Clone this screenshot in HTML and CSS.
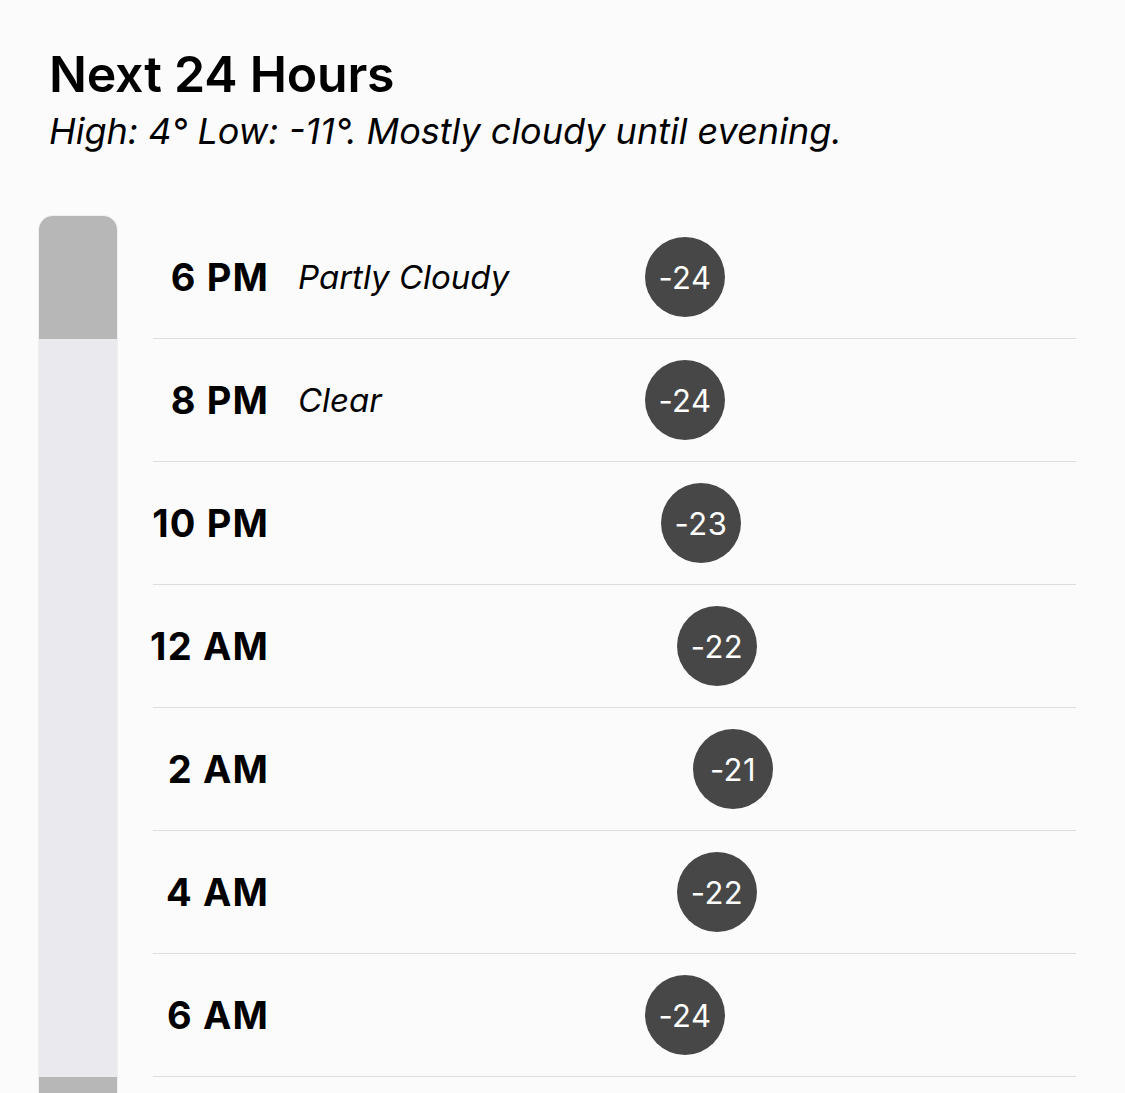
FILE: index.html
```html
<!DOCTYPE html>
<html lang="en">
<head>
<meta charset="utf-8">
<title>Next 24 Hours</title>
<link rel="stylesheet" href="styles.css">
</head>
<body>
<header class="head">
  <h1 class="title">Next 24 Hours</h1>
  <p class="summary">High: 4° Low: -11°. Mostly cloudy until evening.</p>
</header>
<main class="forecast">
  <div class="bar">
    <div class="bar-seg bar-dark bar-top"></div>
    <div class="bar-seg bar-light"></div>
    <div class="bar-seg bar-dark bar-end"></div>
  </div>
  <ul class="rows">
    <li class="row"><span class="time"><span class="time-text">6 PM</span></span><span class="cond">Partly Cloudy</span><span class="temp" style="margin-left:0px">-24</span></li>
    <li class="row"><span class="time"><span class="time-text">8 PM</span></span><span class="cond">Clear</span><span class="temp" style="margin-left:0px">-24</span></li>
    <li class="row"><span class="time"><span class="time-text">10 PM</span></span><span class="cond"></span><span class="temp" style="margin-left:16px">-23</span></li>
    <li class="row"><span class="time"><span class="time-text">12 AM</span></span><span class="cond"></span><span class="temp" style="margin-left:32px">-22</span></li>
    <li class="row"><span class="time"><span class="time-text">2 AM</span></span><span class="cond"></span><span class="temp" style="margin-left:48px">-21</span></li>
    <li class="row"><span class="time"><span class="time-text">4 AM</span></span><span class="cond"></span><span class="temp" style="margin-left:32px">-22</span></li>
    <li class="row"><span class="time"><span class="time-text">6 AM</span></span><span class="cond"></span><span class="temp" style="margin-left:0px">-24</span></li>
  </ul>
</main>
</body>
</html>
```
FILE: styles.css
```css
html, body {
  margin: 0;
  padding: 0;
  background: #fbfbfb;
  height: 100%;
  overflow: hidden;
}
body {
  font-family: Inter, "Noto Sans", sans-serif;
  color: #000;
}
.head {
  padding: 44px 0 0 49px;
}
.title {
  margin: 0;
  font-size: 50px;
  font-weight: 600;
  line-height: 60px;
  letter-spacing: -0.2px;
}
.summary {
  margin: 2px 0 0 0;
  font-size: 36px;
  font-style: italic;
  font-weight: 400;
  line-height: 50px;
}
.forecast {
  display: flex;
  padding-top: 60px;
}
.bar {
  margin-left: 39px;
  width: 78px;
  display: flex;
  flex-direction: column;
  flex-shrink: 0;
  height: 1000px;
  border-radius: 14px 14px 0 0;
  overflow: hidden;
  box-shadow: 0 0 0 1px #efefef;
}
.bar-dark { background: #b7b7b7; }
.bar-light { background: #e9e9ee; }
.bar-top { height: 123px; }
.bar-light { height: 738px; }
.bar-end { flex: 1; }
.rows {
  list-style: none;
  margin: 0 0 0 36px;
  padding: 0;
  width: 923px;
}
.row {
  display: flex;
  align-items: center;
  height: 122px;
  border-bottom: 1px solid #dddddd;
}
.time {
  width: 115px;
  flex-shrink: 0;
  display: flex;
  justify-content: flex-end;
  white-space: nowrap;
}
.time-text {
  font-size: 38px;
  font-weight: 700;
  letter-spacing: 1.2px;
  margin-right: -1.2px;
}
.cond {
  width: 347px;
  flex-shrink: 0;
  margin-left: 30px;
  font-size: 33px;
  font-style: italic;
  letter-spacing: 0;
}
.temp {
  width: 80px;
  height: 80px;
  flex-shrink: 0;
  border-radius: 50%;
  background: #474747;
  color: #fff;
  display: flex;
  align-items: center;
  justify-content: center;
  font-size: 31px;
  font-weight: 400;
  letter-spacing: 0.5px;
}
```
